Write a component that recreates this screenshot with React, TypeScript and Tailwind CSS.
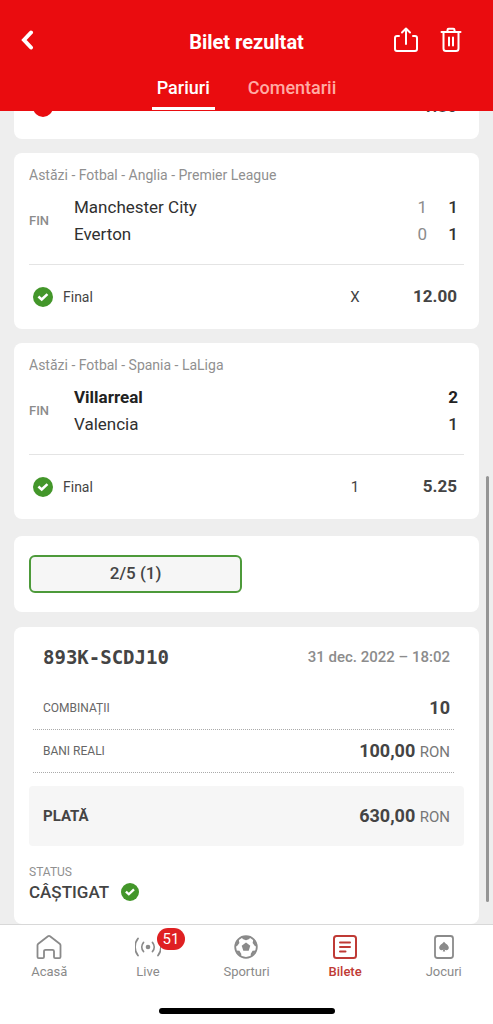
import type { ReactNode } from "react";

type Team = {
  name: string;
  scores: string[];
  winner?: boolean;
};

type Match = {
  league: string;
  teams: Team[];
  pick: string;
  odds: string;
};

const matches: Match[] = [
  {
    league: "Astăzi - Fotbal - Anglia - Premier League",
    teams: [
      { name: "Manchester City", scores: ["1", "1"] },
      { name: "Everton", scores: ["0", "1"] },
    ],
    pick: "X",
    odds: "12.00",
  },
  {
    league: "Astăzi - Fotbal - Spania - LaLiga",
    teams: [
      { name: "Villarreal", scores: ["2"], winner: true },
      { name: "Valencia", scores: ["1"] },
    ],
    pick: "1",
    odds: "5.25",
  },
];

const CheckBadge = ({ className }: { className: string }) => (
  <svg viewBox="0 0 20 20" className={className} aria-hidden="true">
    <circle cx="10" cy="10" r="10" fill="#43962a" />
    <path
      d="M6.4 10.400l2.300 2.100 4.800-4.500"
      fill="none"
      stroke="#fff"
      strokeWidth="2.6"
      strokeLinecap="square"
    />
  </svg>
);

const BackIcon = () => (
  <svg viewBox="0 0 14 20" className="h-5 w-3.5" aria-hidden="true">
    <path
      d="M11 2.500L4 10l7 7.500"
      fill="none"
      stroke="currentColor"
      strokeWidth="4"
      strokeLinecap="round"
    />
  </svg>
);

const ShareIcon = () => (
  <svg
    viewBox="0 0 26 26"
    className="size-[26px]"
    fill="none"
    stroke="currentColor"
    strokeWidth="2"
    strokeLinecap="round"
    strokeLinejoin="round"
    aria-hidden="true"
  >
    <path d="M6 9H4a2 2 0 0 0-2 2v11a2 2 0 0 0 2 2h18a2 2 0 0 0 2-2V11a2 2 0 0 0-2-2h-2" />
    <path d="M13 17V2M9 5.5L13 1.5l4 4" />
  </svg>
);

const TrashIcon = () => (
  <svg
    viewBox="0 0 24 26"
    className="h-[26px] w-6"
    fill="none"
    stroke="currentColor"
    strokeWidth="2"
    strokeLinecap="round"
    strokeLinejoin="round"
    aria-hidden="true"
  >
    <path d="M2.5 5h19M8.5 4.5V3a1.2 1.2 0 0 1 1.2-1.2h4.6A1.2 1.2 0 0 1 15.500 3v1.500" />
    <path d="M4.500 5v16.500a2.500 2.500 0 0 0 2.500 2.500h10a2.500 2.500 0 0 0 2.500-2.500V5" />
    <path d="M10 10.500v8M14 10.500v8" />
  </svg>
);

const HomeIcon = () => (
  <svg
    viewBox="0 0 26 26"
    className="size-[26px]"
    fill="none"
    stroke="currentColor"
    strokeWidth="1.8"
    strokeLinejoin="round"
    aria-hidden="true"
  >
    <path d="M1.500 11.300a2 2 0 0 1 .8-1.600L12 2.300a1.700 1.700 0 0 1 2 0l9.700 7.400a2 2 0 0 1 .8 1.600V23a1.200 1.200 0 0 1-1.200 1.200h-4.100A1.200 1.200 0 0 1 18 23v-5.700a1.500 1.500 0 0 0-1.500-1.500h-7A1.500 1.500 0 0 0 8 17.300V23a1.200 1.200 0 0 1-1.200 1.200H2.700A1.200 1.200 0 0 1 1.500 23z" />
  </svg>
);

const LiveIcon = () => (
  <svg
    viewBox="0 0 26 26"
    className="size-[26px]"
    fill="none"
    stroke="currentColor"
    strokeWidth="1.8"
    strokeLinecap="round"
    aria-hidden="true"
  >
    <circle cx="13" cy="13" r="2.300" fill="currentColor" stroke="none" />
    <path d="M8.500 8.500a7 7 0 0 0 0 9M17.500 8.500a7 7 0 0 1 0 9" />
    <path d="M3 4.500a13.500 13.500 0 0 0 0 17M23 4.500a13.500 13.500 0 0 1 0 17" />
  </svg>
);

const BallIcon = () => (
  <svg viewBox="0 0 26 26" className="size-[26px]" aria-hidden="true">
    <circle cx="13" cy="13" r="10.800" fill="none" stroke="currentColor" strokeWidth="1.800" />
    <g fill="currentColor">
      <path d="M13 8.600l4.300 3.100-1.600 5.100h-5.400l-1.600-5.100z" />
      <path d="M8.500 2.800h9L16.300 5 13 6.300 9.700 5z" />
      <path d="M20.500 5l3.700 7.500-2.300-.4-2.300-3z" />
      <path d="M5.500 5L1.800 12.500l2.300-.4 2.300-3z" />
      <path d="M23.200 16.500l-5.200 6.400-.3-3 1.900-3.100z" />
      <path d="M2.800 16.500L8 22.900l.3-3-1.900-3.100z" />
    </g>
  </svg>
);

const TicketIcon = () => (
  <svg
    viewBox="0 0 26 26"
    className="size-[26px]"
    fill="none"
    stroke="currentColor"
    strokeWidth="2"
    strokeLinecap="round"
    aria-hidden="true"
  >
    <rect x="2" y="2" width="22" height="22" rx="2.500" />
    <path d="M8 8.500h10M8 13h10M8 17.500h5.500" />
  </svg>
);

const CardIcon = () => (
  <svg viewBox="0 0 26 26" className="size-[26px]" aria-hidden="true">
    <rect
      x="4"
      y="2"
      width="18"
      height="22"
      rx="2.500"
      fill="none"
      stroke="currentColor"
      strokeWidth="1.800"
    />
    <path
      fill="currentColor"
      d="M13 7.800c1 1.600 4.800 3.300 4.800 6 0 1.500-1.100 2.400-2.300 2.400-.8 0-1.500-.3-1.900-.8l.7 2.100h-2.600l.7-2.100c-.4.500-1.100.8-1.900.8-1.200 0-2.300-.9-2.300-2.400 0-2.700 3.800-4.400 4.800-6z"
    />
  </svg>
);

type NavItem = {
  label: string;
  icon: ReactNode;
  badge?: string;
  active?: boolean;
};

const navItems: NavItem[] = [
  { label: "Acasă", icon: <HomeIcon /> },
  { label: "Live", icon: <LiveIcon />, badge: "51" },
  { label: "Sporturi", icon: <BallIcon /> },
  { label: "Bilete", icon: <TicketIcon />, active: true },
  { label: "Jocuri", icon: <CardIcon /> },
];

const MatchCard = ({ match }: { match: Match }) => (
  <article className="rounded-lg bg-white px-[15px] pt-3">
    <p className="text-sm leading-5 text-[#909090]">{match.league}</p>
    <div className="mt-[9px] flex items-center border-b border-[#e4e4e4] pb-4">
      <span className="w-[45px] text-[13px] font-medium text-[#8c8c8c]">FIN</span>
      <div className="flex-1">
        {match.teams.map((team) => (
          <div
            key={team.name}
            className={`flex text-[17px] leading-[27px] ${
              team.winner ? "font-bold text-[#222]" : "text-[#303030]"
            }`}
          >
            <span className="flex-1">{team.name}</span>
            {team.scores.map((score, i) => (
              <span
                key={i}
                className={`w-[31px] pr-1.5 text-right ${
                  i < team.scores.length - 1
                    ? "font-normal text-[#8c8c8c]"
                    : team.winner
                      ? "font-bold"
                      : "font-medium"
                }`}
              >
                {score}
              </span>
            ))}
          </div>
        ))}
      </div>
    </div>
    <div className="flex h-16 items-center pr-[7px] pl-1 text-[#444]">
      <CheckBadge className="size-5" />
      <span className="ml-2.5 flex-1 text-sm">Final</span>
      <span className="w-5 text-center text-[15px]">{match.pick}</span>
      <span className="w-[92px] text-right text-[17px] font-bold">{match.odds}</span>
    </div>
  </article>
);

export default function App() {
  return (
    <div className="flex h-screen flex-col overflow-hidden bg-[#eee] font-[Roboto,'Noto_Sans',sans-serif]">
      <header className="shrink-0 bg-[#ea0c0f] pt-6 pb-px text-white">
        <div className="grid grid-cols-[1fr_auto_1fr] items-center px-5">
          <button type="button" aria-label="Înapoi" className="justify-self-start">
            <BackIcon />
          </button>
          <h1 className="pt-1 text-xl leading-7 font-bold">Bilet rezultat</h1>
          <div className="flex gap-5 justify-self-end pr-2.5">
            <button type="button" aria-label="Distribuie">
              <ShareIcon />
            </button>
            <button type="button" aria-label="Șterge">
              <TrashIcon />
            </button>
          </div>
        </div>
        <div className="mt-5 flex justify-center gap-7 text-lg leading-6 font-medium">
          <button type="button" className="border-b-3 border-white px-[5px] pb-[7px]">
            Pariuri
          </button>
          <button type="button" className="border-b-3 border-transparent px-[5px] pb-[7px] text-[#ffaba4]">
            Comentarii
          </button>
        </div>
      </header>

      <main className="relative flex min-h-0 flex-1 flex-col justify-end overflow-hidden px-3.5">
        <div className="flex shrink-0 flex-col gap-3.5">
          <article className="flex h-16 items-center rounded-b-lg bg-white pr-[22px] pl-[19px]">
            <span className="size-5 rounded-full bg-[#ea0c0f]" />
            <span className="flex-1 text-right text-[17px] font-bold text-[#444]">1.80</span>
          </article>
          {matches.map((match) => (
            <MatchCard key={match.league} match={match} />
          ))}
        </div>

        <section className="mt-[17px] shrink-0 rounded-lg bg-white px-[15px] py-[19px]">
          <button
            type="button"
            className="h-[38px] w-[49%] rounded-md border-2 border-[#4d9a3a] bg-[#f6f6f6] text-[17px] font-medium text-[#444]"
          >
            2/5 (1)
          </button>
        </section>

        <section className="mt-[15px] shrink-0 rounded-lg bg-white px-[15px] pt-4 pb-[22px] text-[#444]">
          <div className="flex h-7 items-center justify-between px-3.5">
            <h2 className="font-['DejaVu_Sans_Mono',monospace] text-[19px] font-bold">893K-SCDJ10</h2>
            <time className="text-[15px] font-medium text-[#8c8c8c]">31 dec. 2022 – 18:02</time>
          </div>
          <dl className="mt-4">
            <div className="mr-2.5 ml-1 flex h-[43px] items-center justify-between border-b border-dotted border-[#aaa] pr-1 pl-2.5">
              <dt className="text-xs text-[#666]">COMBINAȚII</dt>
              <dd className="text-lg font-bold">10</dd>
            </div>
            <div className="mr-2.5 ml-1 flex h-[43px] items-center justify-between border-b border-dotted border-[#aaa] pr-1 pl-2.5">
              <dt className="text-xs text-[#666]">BANI REALI</dt>
              <dd className="text-lg font-bold">
                100,00 <span className="text-[15px] font-normal text-[#777]">RON</span>
              </dd>
            </div>
            <div className="mt-[13px] flex h-[60px] items-center justify-between rounded bg-[#f6f6f6] px-3.5">
              <dt className="text-[15px] font-bold">PLATĂ</dt>
              <dd className="text-lg font-bold">
                630,00 <span className="text-[15px] font-normal text-[#777]">RON</span>
              </dd>
            </div>
          </dl>
          <p className="mt-4 text-xs leading-5 text-[#909090]">STATUS</p>
          <p className="flex items-center gap-3 text-[17px] leading-5 font-medium">
            CÂȘTIGAT
            <CheckBadge className="size-[18px]" />
          </p>
        </section>

        {/* scroll thumb */}
        <div className="absolute right-1 bottom-[22px] h-[426px] w-[3px] rounded-full bg-[#959595]" />
      </main>

      <nav className="shrink-0 border-t border-[#d8d8d8] bg-white pt-[9px]">
        <ul className="grid grid-cols-5">
          {navItems.map((item) => (
            <li key={item.label}>
              <a
                href="#"
                className={`flex flex-col items-center text-[13px] leading-6 ${
                  item.active ? "font-medium text-[#bf3a35]" : "text-[#8a8a8a]"
                }`}
              >
                <span className="relative">
                  {item.icon}
                  {item.badge && (
                    <span className="absolute -top-1.5 left-[22px] flex h-[22px] w-7 items-center justify-center rounded-full bg-[#df2022] text-[15px] text-white">
                      {item.badge}
                    </span>
                  )}
                </span>
                {item.label}
              </a>
            </li>
          ))}
        </ul>
        <div className="mx-auto mt-6 mb-2.5 h-1.5 w-44 rounded-full bg-black" />
      </nav>
    </div>
  );
}
